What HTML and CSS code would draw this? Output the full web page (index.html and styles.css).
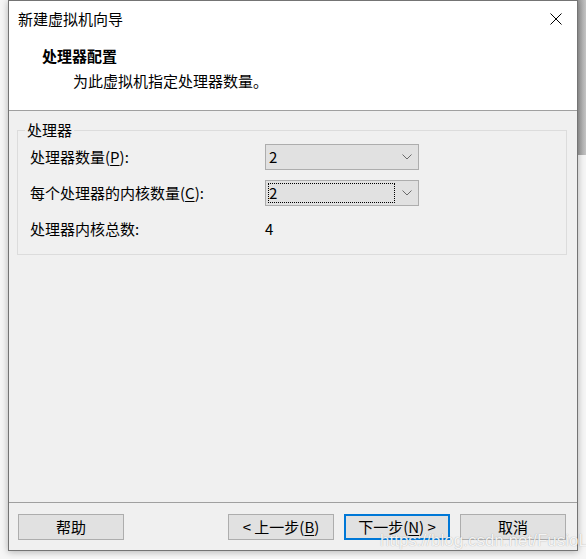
FILE: index.html
```html
<!DOCTYPE html>
<html lang="zh-CN">
<head>
<meta charset="utf-8">
<title>新建虚拟机向导</title>
<link rel="stylesheet" href="styles.css">
</head>
<body>
<div class="window">
  <header class="header">
    <div class="titlebar">
      <span class="title">新建虚拟机向导</span>
      <svg class="close" width="12" height="12" viewBox="0 0 12 12"><path d="M0.5 0.5 L11.5 11.5 M11.5 0.5 L0.5 11.5" stroke="#000" stroke-width="1" fill="none"/></svg>
    </div>
    <h1 class="heading">处理器配置</h1>
    <p class="subtitle">为此虚拟机指定处理器数量。</p>
  </header>
  <main class="content">
    <fieldset class="group">
      <legend class="legend">处理器</legend>
      <div class="grid">
        <span class="label">处理器数量(<u>P</u>):</span>
        <div class="combo">
          <span class="value">2</span>
          <svg class="chev" width="10" height="6" viewBox="0 0 10 6"><path d="M0.5 0.5 L5 5 L9.5 0.5" stroke="#6a6a6a" stroke-width="1" fill="none"/></svg>
        </div>
        <span class="label">每个处理器的内核数量(<u>C</u>):</span>
        <div class="combo">
          <span class="value focus">2</span>
          <svg class="chev" width="10" height="6" viewBox="0 0 10 6"><path d="M0.5 0.5 L5 5 L9.5 0.5" stroke="#6a6a6a" stroke-width="1" fill="none"/></svg>
        </div>
        <span class="label">处理器内核总数:</span>
        <span class="total">4</span>
      </div>
    </fieldset>
  </main>
  <footer class="footer">
    <button class="btn">帮助</button>
    <div class="nav">
      <button class="btn">&lt; 上一步(<u>B</u>)</button>
      <button class="btn primary">下一步(<u>N</u>) &gt;</button>
      <button class="btn">取消</button>
    </div>
  </footer>
</div>
<div class="watermark">https://blog.csdn.net/FusioLi</div>
</body>
</html>
```
FILE: styles.css
```css
html, body {
  margin: 0;
  padding: 0;
}
body {
  width: 586px;
  height: 559px;
  overflow: hidden;
  position: relative;
  background-color: #f6f6f6;
  background-image: linear-gradient(to right, #9c9c9c, #c4c4c4);
  background-repeat: no-repeat;
  background-position: right top;
  background-size: 8px 155px;
  font-family: "Noto Sans CJK SC", "Noto Sans", sans-serif;
  font-size: 15px;
  line-height: 20px;
  color: #000;
}
.window {
  margin-left: 8px;
  width: 568px;
  height: 549px;
  border: 1px solid #747474;
  background: #f0f0f0;
  display: flex;
  flex-direction: column;
  box-shadow: 0 1px 7px rgba(0, 0, 0, 0.28);
}
.header {
  background: #fff;
  height: 101px;
  padding: 8px 0 0 9px;
  border-bottom: 1px solid #a0a0a0;
}
.titlebar {
  display: flex;
  align-items: center;
  justify-content: space-between;
  padding-right: 15px;
  height: 20px;
}
.title {
  font-weight: normal;
}
.close {
  display: block;
}
.heading {
  margin: 17px 0 0 24px;
  font-size: 15px;
  line-height: 20px;
  font-weight: bold;
}
.subtitle {
  margin: 5px 0 0 55px;
}
.content {
  flex: 1;
}
.group {
  margin: 9px 10px 0 8px;
  padding: 4px 0 12px 0;
  border: 1px solid #dcdcdc;
  min-inline-size: 0;
}
.legend {
  margin-left: 7px;
  padding: 0 2px;
  line-height: 20px;
}
.grid {
  display: grid;
  grid-template-columns: 235px 154px;
  grid-auto-rows: 26px;
  row-gap: 10px;
  padding-left: 12px;
  align-items: center;
}
.label u, .btn u {
  text-decoration-thickness: 1px;
  text-underline-offset: 2px;
}
.combo {
  box-sizing: border-box;
  height: 26px;
  border: 1px solid #adadad;
  background: #e1e1e1;
  display: flex;
  align-items: center;
  justify-content: space-between;
  padding: 2px 6px 2px 2px;
}
.value {
  box-sizing: border-box;
  height: 20px;
  width: 127px;
  padding-left: 0;
  border: 1px dotted transparent;
  line-height: 18px;
}
.value.focus {
  border-color: #000;
}
.chev {
  display: block;
}
.total {
  line-height: 26px;
}
.footer {
  border-top: 1px solid #a0a0a0;
  padding: 11px 11px 10px 9px;
  display: flex;
  justify-content: space-between;
}
.nav {
  display: flex;
  gap: 10px;
}
.btn {
  box-sizing: border-box;
  width: 106px;
  height: 26px;
  border: 1px solid #adadad;
  background: #e1e1e1;
  font-family: inherit;
  font-size: 15px;
  line-height: 22px;
  color: #000;
  padding: 0;
  margin: 0;
}
.btn.primary {
  border: 2px solid #0078d7;
}
.watermark {
  position: absolute;
  left: 380px;
  top: 531px;
  font-family: "Liberation Sans", Arial, sans-serif;
  font-size: 17px;
  line-height: 20px;
  color: rgba(255, 255, 255, 0.9);
  text-shadow: 0 0 1px rgba(0, 0, 0, 0.35);
  white-space: nowrap;
}
```
